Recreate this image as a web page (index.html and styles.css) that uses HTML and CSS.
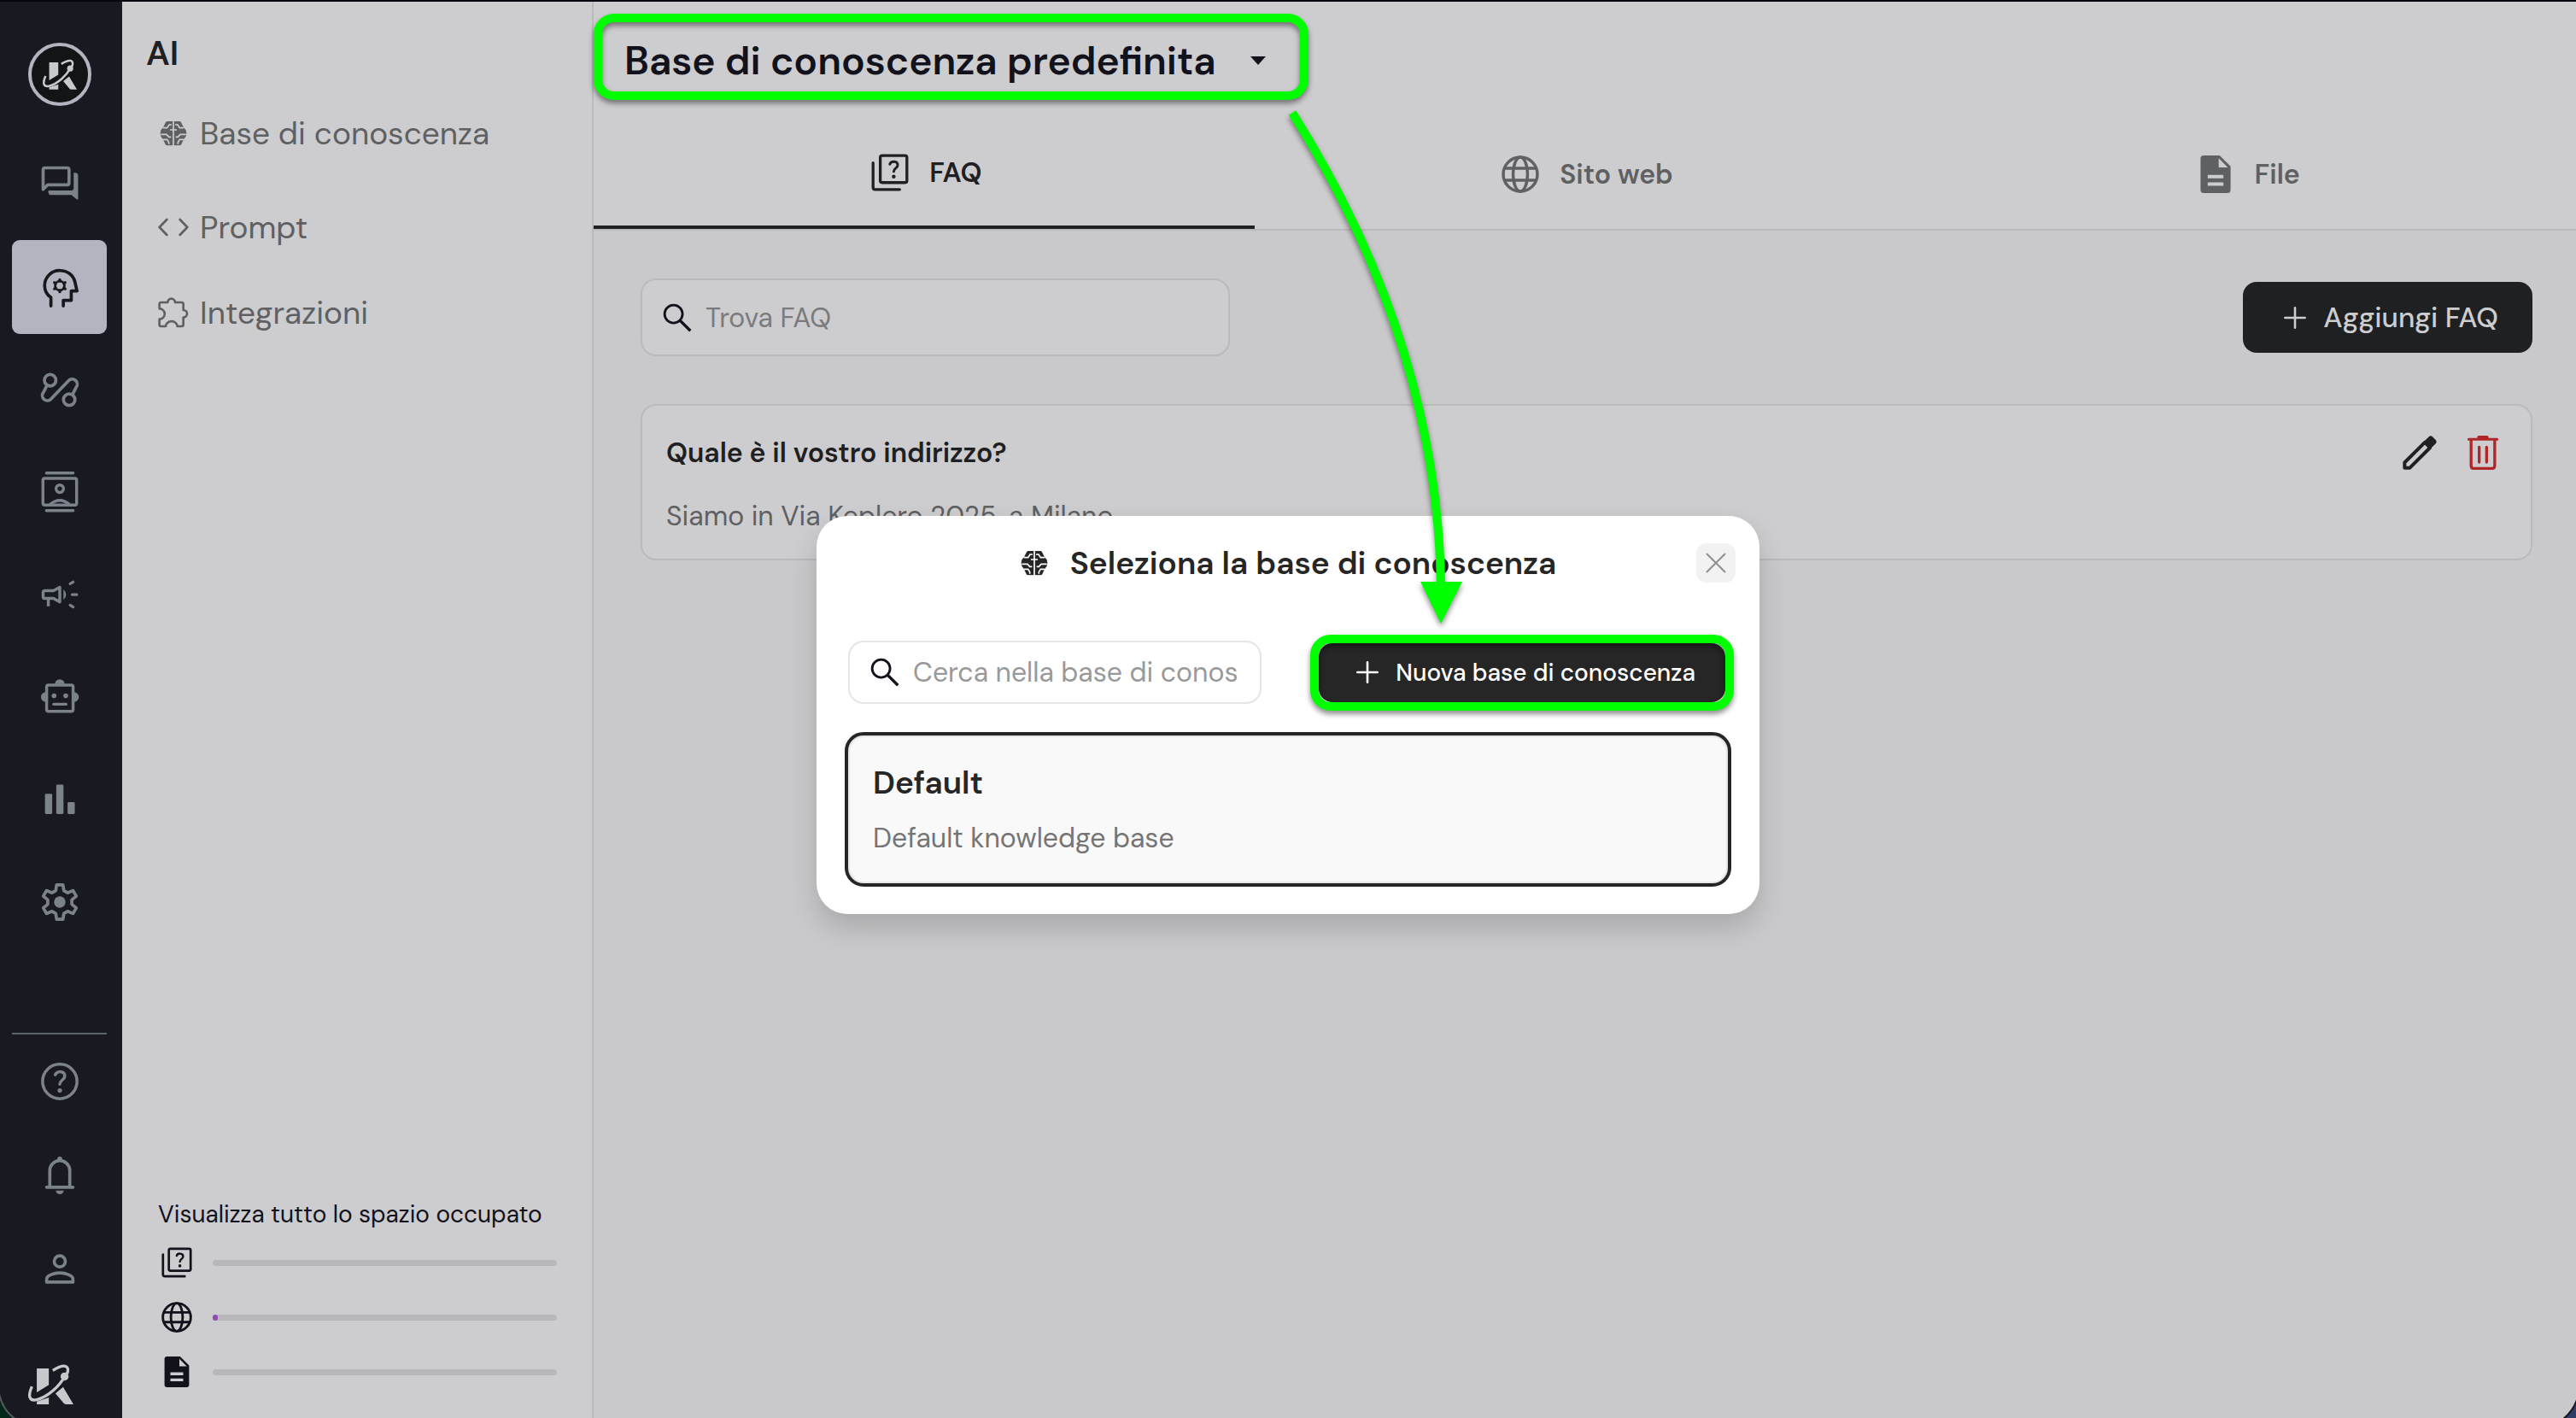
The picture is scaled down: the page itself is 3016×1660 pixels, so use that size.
FILE: index.html
```html
<!DOCTYPE html>
<html lang="it">
<head>
<meta charset="utf-8">
<meta name="viewport" content="width=device-width, initial-scale=1">
<title>Base di conoscenza</title>
<link rel="stylesheet" href="styles.css">
</head>
<body>
<svg class="sprite" aria-hidden="true">
  <symbol id="i-logo" viewBox="0 0 158 140">
    <path fill="currentColor" d="M30 15h42v57L30 98zM30 130l42-14v24H30zM95 102l27-22 36 60h-26q-6 0-9-5z"/>
    <circle fill="currentColor" cx="127" cy="43" r="14"/>
    <path fill="none" stroke="currentColor" stroke-width="10" d="M13 78C-2 112 4 130 30 124C70 114 110 75 127 43L137 30C144 4 126-3 86 22"/>
  </symbol>
  <symbol id="i-chat" viewBox="0 0 24 24">
    <path fill="none" stroke="currentColor" stroke-width="1.7" stroke-linejoin="round" d="M3 14.6V4a1 1 0 0 1 1-1h12a1 1 0 0 1 1 1v7.200a1 1 0 0 1-1 1H5.400z"/>
    <path fill="currentColor" d="M19.500 5.700h.8q1.600 0 1.600 1.700v12.200q0 .9-.8.4l-2.800-2.300H7.500a1.700 1.700 0 0 1-1.700-1.700v-.8h12.500q1.200 0 1.200-1.200z"/>
  </symbol>
  <symbol id="i-head" viewBox="0 0 24 24">
    <g fill="none" stroke="currentColor" stroke-linecap="round" stroke-linejoin="round">
      <path stroke-width="1.7" d="M7.200 22.200v-4.600C4.900 16.200 3.800 13.700 3.800 11.100A8.100 8.100 0 0 1 12 3.100c4.100 0 7.200 2.300 8.100 5.800l1.200 5.200h-3.100v5.100h-4.300v3"/>
      <circle stroke-width="1.300" cx="12" cy="11.300" r="2.500"/>
      <path stroke-width="1.500" d="M12 8.800V8M12 14.600v-.8M9.800 10l-.7-.4M14.900 13l-.7-.4M9.800 12.600l-.7.4M14.900 9.600l-.7.400"/>
    </g>
  </symbol>
  <symbol id="i-route" viewBox="0 0 24 24">
    <g fill="none" stroke="currentColor" stroke-width="1.700">
      <circle cx="6.800" cy="7" r="3.100"/><circle cx="17.100" cy="17.500" r="3.100"/>
      <path d="M5.100 9.700 3.200 13.500a2.700 2.700 0 0 0 4.200 3.500L16.600 7.400a2.700 2.700 0 0 1 4.200 3.500L18.800 14.800"/>
    </g>
  </symbol>
  <symbol id="i-contacts" viewBox="0 0 24 24">
    <g fill="none" stroke="currentColor" stroke-width="1.600" stroke-linecap="round">
      <rect x="2.900" y="4.600" width="18.200" height="14.400" rx="1"/>
      <path d="M4.800 1.700h14.400M4.800 22h14.400M7 18.500q5-4 10 0"/>
      <circle cx="12" cy="10.200" r="2"/>
    </g>
  </symbol>
  <symbol id="i-campaign" viewBox="0 0 24 24">
    <g fill="none" stroke="currentColor" stroke-width="1.600" stroke-linejoin="round">
      <path d="M4 9.900h4.600l3.400-1.800v7.900l-3.400-1.900H4a1 1 0 0 1-1-1v-2.200a1 1 0 0 1 1-1zM5.800 14.100v4.200"/>
      <path stroke-linecap="round" stroke-width="1.500" d="M17.600 6.200 19.200 5.200M18.700 12h2.500M17.600 17.700l1.600 1"/>
    </g>
    <path fill="currentColor" d="M14 9.200q2.800 2.800 0 5.700z"/>
  </symbol>
  <symbol id="i-robot" viewBox="0 0 24 24">
    <rect fill="none" stroke="currentColor" stroke-width="1.600" x="4.900" y="5.500" width="14.300" height="14.200" rx="1"/>
    <path fill="currentColor" d="M9.400 5a2.600 2.600 0 0 1 5.200 0zM4.400 9.400v5.200a2.600 2.600 0 0 1 0-5.200zM19.700 9.400v5.200a2.600 2.600 0 0 0 0-5.200z"/>
    <circle fill="currentColor" cx="8.900" cy="11.300" r="1.300"/><circle fill="currentColor" cx="15.200" cy="11.300" r="1.300"/>
    <path fill="none" stroke="currentColor" stroke-width="1.500" stroke-linecap="round" d="M8.700 15.900h6.700"/>
  </symbol>
  <symbol id="i-bars" viewBox="0 0 24 24">
    <g fill="currentColor"><rect x="4" y="8.900" width="3.900" height="10.900" rx=".6"/><rect x="10.100" y="3.900" width="3.900" height="15.900" rx=".6"/><rect x="16.200" y="13.400" width="3.900" height="6.400" rx=".6"/></g>
  </symbol>
  <symbol id="i-gear" viewBox="0 0 24 24">
    <path fill="none" stroke="currentColor" stroke-width="1.700" stroke-linejoin="round" d="M10.300 2.700h3.400l.5 3.100 2 1.200 3-1.200 1.700 3-2.400 2v2.400l2.400 2-1.700 3-3-1.200-2 1.200-.5 3.100h-3.400l-.5-3.100-2-1.200-3 1.200-1.700-3 2.400-2v-2.400l-2.400-2 1.700-3 3 1.200 2-1.200z"/>
    <circle fill="currentColor" cx="12" cy="12" r="3.100"/>
  </symbol>
  <symbol id="i-help" viewBox="0 0 24 24">
    <circle fill="none" stroke="currentColor" stroke-width="1.600" cx="12" cy="12" r="9.300"/>
    <path fill="none" stroke="currentColor" stroke-width="1.600" stroke-linecap="round" d="M9.500 8.400c1-2.300 5.200-2.300 5.200.7 0 1.900-2.700 2.300-2.700 4.400"/>
    <circle fill="currentColor" cx="12" cy="16.900" r="1.200"/>
  </symbol>
  <symbol id="i-bell" viewBox="0 0 24 24">
    <path fill="none" stroke="currentColor" stroke-width="1.700" stroke-linecap="round" d="M6.600 18.200V9.400a5.400 5.400 0 0 1 10.800 0v8.800M4.900 18.400h14.200M12 2.800V4"/>
    <circle fill="currentColor" cx="12" cy="3.100" r="1.300"/>
    <path fill="currentColor" d="M9.900 20.200h4.200a2.100 2 0 0 1-4.200 0z"/>
  </symbol>
  <symbol id="i-person" viewBox="0 0 24 24">
    <g fill="none" stroke="currentColor" stroke-width="1.700" stroke-linejoin="round"><circle cx="12" cy="7.700" r="3"/>
    <path d="M4.900 18.900v-1.600c0-2 4-3.400 7.100-3.400s7.100 1.400 7.100 3.400v1.600z"/></g>
  </symbol>
  <symbol id="i-brain" viewBox="0 0 96 88">
    <mask id="brain-cuts">
      <rect width="96" height="88" fill="#fff"/>
      <g fill="none" stroke="#000" stroke-width="5">
        <path d="M48-2v92M36 32h24M12 25h14l7-11h9M84 25H70l-7-11h-9M4 48h20l8 9h8M92 48H72l-8 9h-8M12 66h14l6 10v6M84 66H70l-6 10v6"/>
      </g>
    </mask>
    <path mask="url(#brain-cuts)" fill="currentColor" d="M26 2h44q3 0 5 4l10 19 7 8q4 11 0 22l-7 9-9 19q-2 4-6 4H26q-4 0-6-4l-9-19-7-9q-4-11 0-22l7-8L21 6q2-4 5-4z"/>
  </symbol>
  <symbol id="i-code" viewBox="0 0 108 108">
    <path fill="none" stroke="currentColor" stroke-width="8" stroke-linecap="round" stroke-linejoin="round" d="M31 27 5 54l26 27M77 27l26 27-26 27"/>
  </symbol>
  <symbol id="i-puzzle" viewBox="0 0 108 108">
    <path fill="none" stroke="currentColor" stroke-width="8" stroke-linejoin="round" d="M5 24q0-6 6-6h23a13 13 0 0 1 26 0h23q6 0 6 6v21a13 13 0 0 1 0 26v25q0 6-6 6H68a20 17 0 0 0-41 0H10q-5 0-5-6V77a18 18 0 0 0 0-37z"/>
  </symbol>
  <symbol id="i-faq" viewBox="0 0 24 24">
    <g fill="none" stroke="currentColor" stroke-width="1.800" stroke-linecap="round">
      <rect x="5.800" y="1.200" width="17" height="17.200" rx="1.200"/>
      <path d="M1.200 5.800v15.600q0 1.400 1.400 1.400h15.600"/>
      <path stroke-width="1.600" d="M11.900 6.700c.7-2.300 5.200-2.300 5 .7-.1 1.800-2.500 2-2.500 4"/>
    </g>
    <circle fill="currentColor" cx="14.400" cy="14.600" r="1.200"/>
  </symbol>
  <symbol id="i-globe" viewBox="0 0 24 24">
    <g fill="none" stroke="currentColor" stroke-width="1.900">
      <circle cx="12" cy="12" r="10.900"/><ellipse cx="12" cy="12" rx="4.600" ry="10.900"/><path d="M2 8.200h20M2 15.800h20"/>
    </g>
  </symbol>
  <symbol id="i-file" viewBox="0 0 24 24">
    <path fill="currentColor" fill-rule="evenodd" d="M4.400 0h10.200L21.600 7v15a2 2 0 0 1-2 2H4.400a2 2 0 0 1-2-2V2a2 2 0 0 1 2-2zM14 1.800V7.600h5.800zM7 12.400v2.200h10v-2.200zM7 17.200v2.200h10v-2.200z"/>
  </symbol>
  <symbol id="i-search" viewBox="0 0 24 24">
    <g fill="none" stroke="currentColor" stroke-width="2"><circle cx="8.900" cy="8.900" r="7.400"/><path stroke-width="2.400" d="m14.200 14.200 8.600 8.600"/></g>
  </symbol>
  <symbol id="i-plus" viewBox="0 0 24 24">
    <path fill="none" stroke="currentColor" stroke-width="2.400" stroke-linecap="round" d="M12 1.200v21.600M1.200 12h21.600"/>
  </symbol>
  <symbol id="i-close" viewBox="0 0 24 24">
    <path fill="none" stroke="currentColor" stroke-width="2" d="m1 1 22 22M23 1 1 23"/>
  </symbol>
  <symbol id="i-edit" viewBox="0 0 24 24">
    <path fill="none" stroke="currentColor" stroke-width="2.400" stroke-linejoin="round" d="M1.400 22.600v-3.700L15.600 4.700l3.700 3.700L5.100 22.600z"/>
    <path fill="currentColor" d="M14.800 4.400 18.300.9a2 2 0 0 1 2.800 0l2 2a2 2 0 0 1 0 2.800l-3.500 3.500z"/>
  </symbol>
  <symbol id="i-trash" viewBox="0 0 24 24">
    <path fill="none" stroke="currentColor" stroke-width="2" stroke-linecap="round" stroke-linejoin="round" d="M3.700 3v18q0 2 1.600 2h13.400q1.600 0 1.600-2V3M9.400 8v10.600M14.600 8v10.600"/>
    <path fill="currentColor" d="M2 1.600h6V1q0-1 1-1h6q1 0 1 1v.6h6q.9 0 .9.900t-.9.900H2q-.9 0-.9-.9t.9-.9z"/>
  </symbol>
</svg>

<div class="app">
  <nav class="rail" aria-label="Navigazione principale">
    <a class="rail-logo" href="#" aria-label="Home"><svg><use href="#i-logo"/></svg></a>
    <div class="rail-main">
      <a class="rail-item" href="#" aria-label="Chat"><svg><use href="#i-chat"/></svg></a>
      <a class="rail-item rail-item-active" href="#" aria-label="AI"><svg><use href="#i-head"/></svg></a>
      <a class="rail-item" href="#" aria-label="Flussi"><svg><use href="#i-route"/></svg></a>
      <a class="rail-item" href="#" aria-label="Contatti"><svg><use href="#i-contacts"/></svg></a>
      <a class="rail-item" href="#" aria-label="Campagne"><svg><use href="#i-campaign"/></svg></a>
      <a class="rail-item" href="#" aria-label="Bot"><svg><use href="#i-robot"/></svg></a>
      <a class="rail-item" href="#" aria-label="Statistiche"><svg><use href="#i-bars"/></svg></a>
      <a class="rail-item" href="#" aria-label="Impostazioni"><svg><use href="#i-gear"/></svg></a>
    </div>
    <div class="rail-foot">
      <a class="rail-item" href="#" aria-label="Aiuto"><svg><use href="#i-help"/></svg></a>
      <a class="rail-item" href="#" aria-label="Notifiche"><svg><use href="#i-bell"/></svg></a>
      <a class="rail-item" href="#" aria-label="Profilo"><svg><use href="#i-person"/></svg></a>
      <svg class="rail-brand"><use href="#i-logo"/></svg>
    </div>
  </nav>

  <aside class="panel">
    <h2 class="panel-title">AI</h2>
    <ul class="menu">
      <li class="menu-group"><a class="menu-link" href="#"><svg class="menu-icon menu-icon-brain"><use href="#i-brain"/></svg>Base di conoscenza</a></li>
      <li><a class="menu-link" href="#"><svg class="menu-icon"><use href="#i-code"/></svg>Prompt</a></li>
      <li><a class="menu-link" href="#"><svg class="menu-icon"><use href="#i-puzzle"/></svg>Integrazioni</a></li>
    </ul>
    <section class="usage">
      <h3 class="usage-title">Visualizza tutto lo spazio occupato</h3>
      <div class="usage-row"><svg><use href="#i-faq"/></svg><div class="meter"></div></div>
      <div class="usage-row"><svg><use href="#i-globe"/></svg><div class="meter"><div class="meter-fill" style="width:1.5%"></div></div></div>
      <div class="usage-row"><svg><use href="#i-file"/></svg><div class="meter"></div></div>
    </section>
  </aside>

  <main class="main">
    <header class="header">
      <button class="base-picker" type="button">Base di conoscenza predefinita<span class="caret"></span></button>
      <div class="tabs" role="tablist">
        <button class="tab tab-active" role="tab" aria-selected="true" type="button"><svg><use href="#i-faq"/></svg>FAQ</button>
        <button class="tab" role="tab" type="button"><svg><use href="#i-globe"/></svg>Sito web</button>
        <button class="tab" role="tab" type="button"><svg><use href="#i-file"/></svg>File</button>
      </div>
    </header>
    <div class="content">
      <div class="toolbar">
        <label class="search"><svg><use href="#i-search"/></svg><input type="text" placeholder="Trova FAQ" aria-label="Trova FAQ"></label>
        <button class="btn" type="button"><svg><use href="#i-plus"/></svg>Aggiungi FAQ</button>
      </div>
      <article class="faq">
        <div class="faq-text">
          <h3 class="faq-question">Quale è il vostro indirizzo?</h3>
          <p class="faq-answer">Siamo in Via Keplero 2025, a Milano</p>
        </div>
        <div class="faq-actions">
          <button class="icon-btn" type="button" aria-label="Modifica"><svg><use href="#i-edit"/></svg></button>
          <button class="icon-btn icon-btn-danger" type="button" aria-label="Elimina"><svg><use href="#i-trash"/></svg></button>
        </div>
      </article>
    </div>
  </main>
</div>

<div class="overlay">
  <section class="modal" role="dialog" aria-labelledby="modal-title">
    <header class="modal-head">
      <h2 class="modal-title" id="modal-title"><svg><use href="#i-brain"/></svg>Seleziona la base di conoscenza</h2>
      <button class="modal-close" type="button" aria-label="Chiudi"><svg><use href="#i-close"/></svg></button>
    </header>
    <div class="modal-tools">
      <label class="search search-modal"><svg><use href="#i-search"/></svg><input type="text" placeholder="Cerca nella base di conoscenza" aria-label="Cerca nella base di conoscenza"></label>
      <button class="btn btn-new" type="button"><svg><use href="#i-plus"/></svg>Nuova base di conoscenza</button>
    </div>
    <button class="base-card" type="button">
      <span class="base-name">Default</span>
      <span class="base-desc">Default knowledge base</span>
    </button>
  </section>
</div>

<svg class="arrow" viewBox="0 0 220 620" aria-hidden="true">
  <path class="arrow-line" d="M13 12Q182 280 187 564"/>
  <path class="arrow-tip" d="M163 561h49l-25 49z"/>
</svg>
<svg class="corner corner-left" viewBox="0 0 20 32" aria-hidden="true"><path fill="#04281a" stroke="#55585c" stroke-width="2" d="M-2-2Q1 22 19 34H-2z"/></svg>
<svg class="corner corner-right" viewBox="0 0 20 32" aria-hidden="true"><path fill="#2f3a66" stroke="#14161f" stroke-width="2" d="M22 8Q17 24 4 34h18z"/></svg>
</body>
</html>
```
FILE: styles.css
```css
:root {
  --night: #191921;
  --rail-icon: #7b8289;
  --surface: #cdcdcf;
  --ground: #c9c9cb;
  --line: #b9babc;
  --ink: #1f2022;
  --muted: #5f6062;
  --mark: #00ff00;
}

* { box-sizing: border-box; }

body {
  margin: 0;
  font-family: "DM Sans", Inter, "Open Sans", sans-serif;
  font-size: 32px;
  color: var(--ink);
  background: var(--ground);
}

h2, h3, p, ul { margin: 0; padding: 0; }
ul { list-style: none; }
a { color: inherit; text-decoration: none; }
button, input { font: inherit; color: inherit; }
button { margin: 0; padding: 0; border: 0; background: none; cursor: pointer; }
svg { display: block; flex: none; }
.sprite { position: absolute; width: 0; height: 0; }

.app {
  display: flex;
  min-height: 100vh;
  border-top: 2px solid #05060f;
}

/* Icon rail */
.rail {
  display: flex;
  flex-direction: column;
  flex: none;
  width: 143px;
  padding: 48px 18px 16px 14px;
  background: var(--night);
  color: var(--rail-icon);
}
.rail-logo {
  display: grid;
  place-items: center;
  align-self: center;
  width: 74px;
  height: 74px;
  margin-bottom: 37px;
  border: 4px solid #b2b5bf;
  border-radius: 50%;
  background: #131416;
  color: #c8c9cb;
}
.rail-logo svg { width: 40px; height: 36px; }
.rail-main { display: grid; gap: 10px; }
.rail-item {
  display: grid;
  place-items: center;
  height: 110px;
  border-radius: 9px;
}
.rail-item svg { width: 52px; height: 52px; }
.rail-item-active { background: #b2b5bf; color: #17181c; }
.rail-foot {
  margin-top: auto;
  border-top: 2px solid #5b636b;
}
.rail-brand {
  width: 53px;
  height: 47px;
  margin: 56px 0 0 19px;
  color: #c5c9cc;
}

/* Section panel */
.panel {
  display: flex;
  flex-direction: column;
  flex: none;
  width: 552px;
  padding: 34px 41px 36px 28px;
  border-right: 2px solid var(--line);
  background: var(--surface);
}
.panel-title {
  font-size: 40px;
  font-weight: 600;
  line-height: 52px;
}
.menu {
  display: grid;
  gap: 40px;
  margin: 38px 0 0 14px;
  color: var(--muted);
}
.menu-group { padding-bottom: 10px; }
.menu-link {
  display: flex;
  align-items: center;
  gap: 13px;
  font-size: 37px;
  line-height: 60px;
}
.menu-icon { width: 36px; height: 36px; }
.menu-icon-brain { padding: 0 2px; }
.usage {
  display: grid;
  gap: 28px;
  margin: auto 0 0 14px;
  color: #11121b;
}
.usage-title {
  font-size: 28px;
  font-weight: 400;
  line-height: 36px;
  margin-bottom: -8px;
}
.usage-row {
  display: flex;
  align-items: center;
  gap: 24px;
  padding-left: 4px;
}
.usage-row svg { width: 36px; height: 36px; }
.meter {
  flex: 1;
  height: 7px;
  border-radius: 4px;
  background: #b7b8ba;
}
.meter-fill {
  height: 100%;
  border-radius: 4px;
  background: #8e4bb5;
}

/* Main column */
.main { flex: 1; min-width: 0; background: var(--ground); }
.header {
  display: flow-root;
  border-bottom: 2px solid var(--line);
  background: var(--surface);
}
.base-picker {
  position: relative;
  display: flex;
  align-items: center;
  gap: 40px;
  margin-top: 14px;
  padding: 25px 50px 16px 36px;
  font-size: 46px;
  font-weight: 600;
  line-height: 60px;
  color: #11121b;
}
.caret {
  border: 9px solid transparent;
  border-top: 10px solid currentColor;
  border-bottom: 0;
}
.base-picker::after,
.btn-new::after {
  content: "";
  position: absolute;
  inset: 0;
  border: 10px solid var(--mark);
  border-radius: 24px;
  filter: drop-shadow(0 4px 3px rgba(0, 0, 0, 0.45));
}
.tabs {
  display: grid;
  grid-template-columns: repeat(3, 1fr);
  margin-top: 21px;
}
.tab {
  display: flex;
  align-items: center;
  justify-content: center;
  gap: 24px;
  height: 130px;
  padding: 2px 0 0 6px;
  font-weight: 600;
  color: var(--muted);
}
.tab svg { width: 44px; height: 44px; }
.tab-active {
  border-bottom: 4px solid var(--ink);
  color: var(--ink);
}
.content { padding: 56px 51px 56px 55px; }
.toolbar {
  display: flex;
  align-items: center;
  justify-content: space-between;
}
.search {
  display: flex;
  align-items: center;
  gap: 16px;
  width: 690px;
  height: 91px;
  padding: 0 24px;
  border: 2px solid var(--line);
  border-radius: 18px;
  background: var(--surface);
  color: #11121b;
}
.search svg { width: 34px; height: 34px; }
.search input {
  flex: 1;
  min-width: 0;
  padding: 0;
  border: 0;
  outline: 0;
  background: none;
}
.search input::placeholder { color: #7a7b7d; opacity: 1; }
.btn {
  position: relative;
  display: flex;
  align-items: center;
  gap: 20px;
  height: 83px;
  padding: 0 40px 0 48px;
  border-radius: 16px;
  background: var(--ink);
  color: #cdcdcf;
  font-size: 33px;
  font-weight: 500;
}
.btn svg { width: 26px; height: 26px; }
.faq {
  display: flex;
  justify-content: space-between;
  margin-top: 56px;
  padding: 35px 36px 30px 28px;
  border: 2px solid var(--line);
  border-radius: 18px;
  background: var(--surface);
}
.faq-text { display: grid; gap: 34px; line-height: 40px; }
.faq-question { font-size: 32px; font-weight: 600; }
.faq-answer { color: var(--muted); }
.faq-actions { display: flex; align-items: flex-start; gap: 34px; }
.icon-btn svg { width: 40px; height: 40px; }
.icon-btn-danger { color: #b12628; }

/* Dialog */
.overlay {
  position: absolute;
  inset: 0;
  display: grid;
  place-items: center;
  padding-top: 14px;
}
.modal {
  width: 1104px;
  padding: 32px 33px;
  border-radius: 36px;
  background: #fff;
  box-shadow: 0 16px 32px rgba(0, 0, 0, 0.16);
  color: #262626;
}
.modal-head {
  display: flex;
  align-items: center;
}
.modal-title {
  display: flex;
  align-items: center;
  justify-content: center;
  gap: 26px;
  flex: 1;
  padding-left: 42px;
  font-size: 37px;
  font-weight: 600;
  line-height: 46px;
}
.modal-title svg { width: 32px; height: 30px; }
.modal-close {
  display: grid;
  place-items: center;
  width: 46px;
  height: 46px;
  margin-right: -5px;
  border-radius: 12px;
  background: #f2f2f2;
  color: #8f8f8f;
}
.modal-close svg { width: 24px; height: 24px; }
.modal-tools {
  display: flex;
  align-items: center;
  justify-content: space-between;
  margin: 68px 7px 33px 4px;
}
.search-modal {
  width: 484px;
  height: 74px;
  border-color: #e5e5e5;
  background: #fff;
}
.search-modal input::placeholder { color: #999; }
.btn-new {
  height: 69px;
  padding: 0 35px 0 44px;
  background: #262626;
  color: #fff;
  font-size: 28px;
}
.btn-new::after { inset: -10px; }
.base-card {
  display: grid;
  gap: 17px;
  width: 100%;
  padding: 30px 29px;
  border: 4px solid #262626;
  border-radius: 22px;
  background: #f9f9f9;
  box-shadow: inset 0 0 0 2px #e6e6e6;
  text-align: left;
}
.base-name { font-size: 37px; font-weight: 600; line-height: 50px; }
.base-desc { line-height: 46px; color: #757575; }

/* Callout arrow from the picker to the new-base button */
.arrow {
  position: absolute;
  left: 1500px;
  top: 120px;
  width: 220px;
  height: 620px;
  pointer-events: none;
  filter: drop-shadow(0 4px 3px rgba(0, 0, 0, 0.45));
}
.arrow-line { fill: none; stroke: var(--mark); stroke-width: 10; }
.arrow-tip { fill: var(--mark); }

/* Rounded window corners */
.corner { position: absolute; bottom: 0; width: 20px; height: 32px; }
.corner-left { left: 0; }
.corner-right { right: 0; }
```
